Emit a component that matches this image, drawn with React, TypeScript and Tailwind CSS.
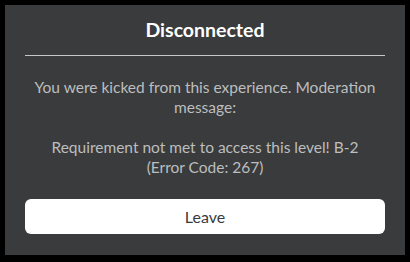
export default function App() {
  return (
    <div className="w-[410px] h-[262px] bg-black p-[5px]">
      <div className="h-[250px] bg-[#393b3d] px-[20px] pt-[13px] flex flex-col font-['Lato','Noto_Sans',sans-serif]">
        <h1 className="text-center text-white font-bold text-[19.5px] leading-[24px]">
          Disconnected
        </h1>
        <div className="h-px bg-[#c6c7c8] mt-[13px]" />
        <p className="mt-[21px] text-center text-[#bdbebe] text-[15.5px] leading-[20px] whitespace-pre-line">
          {"You were kicked from this experience. Moderation\nmessage:\n\nRequirement not met to access this level! B-2\n(Error Code: 267)"}
        </p>
        <button className="mt-[22px] h-[35px] w-full rounded-[6px] bg-white text-[#393b3d] text-[16px]">
          Leave
        </button>
      </div>
    </div>
  );
}
